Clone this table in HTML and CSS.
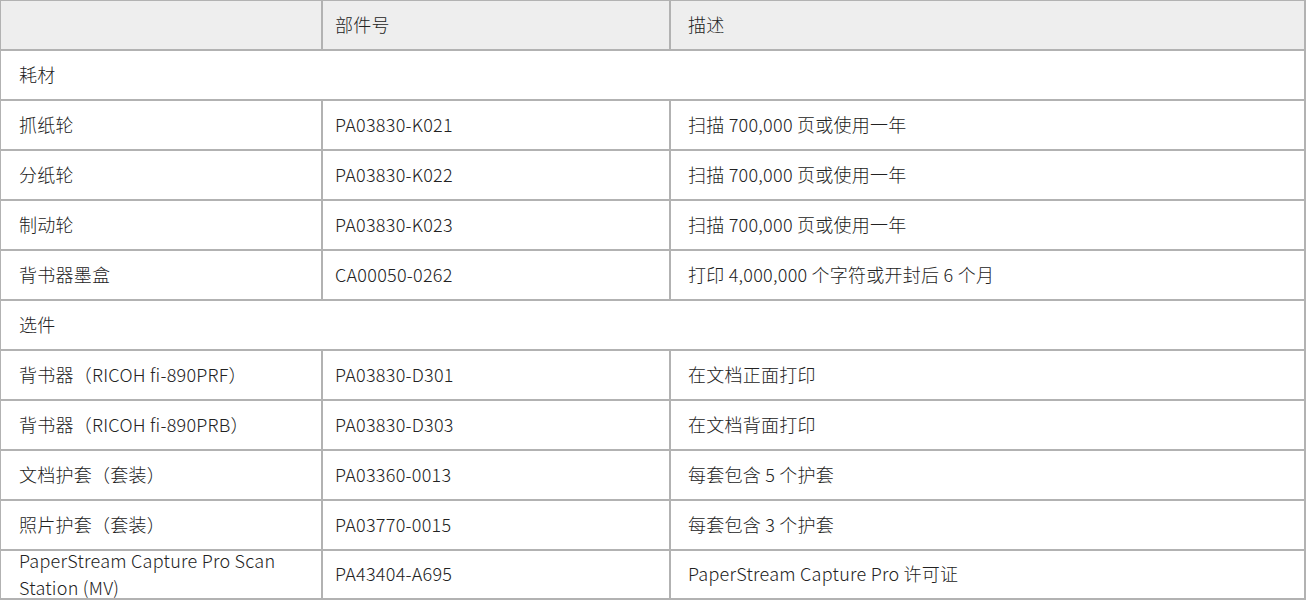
FILE: index.html
```html
<!DOCTYPE html>
<html lang="zh-CN">
<head>
<meta charset="utf-8">
<title>部件</title>
<link rel="stylesheet" href="styles.css">
</head>
<body>
<div class="table">
  <div class="cell head c1"></div>
  <div class="cell head c2">部件号</div>
  <div class="cell head c3">描述</div>

  <div class="cell section">耗材</div>

  <div class="cell c1">抓纸轮</div>
  <div class="cell c2">PA03830-K021</div>
  <div class="cell c3">扫描 700,000 页或使用一年</div>

  <div class="cell c1">分纸轮</div>
  <div class="cell c2">PA03830-K022</div>
  <div class="cell c3">扫描 700,000 页或使用一年</div>

  <div class="cell c1">制动轮</div>
  <div class="cell c2">PA03830-K023</div>
  <div class="cell c3">扫描 700,000 页或使用一年</div>

  <div class="cell c1">背书器墨盒</div>
  <div class="cell c2">CA00050-0262</div>
  <div class="cell c3">打印 4,000,000 个字符或开封后 6 个月</div>

  <div class="cell section">选件</div>

  <div class="cell c1">背书器（RICOH fi-890PRF）</div>
  <div class="cell c2">PA03830-D301</div>
  <div class="cell c3">在文档正面打印</div>

  <div class="cell c1">背书器（RICOH fi-890PRB）</div>
  <div class="cell c2">PA03830-D303</div>
  <div class="cell c3">在文档背面打印</div>

  <div class="cell c1">文档护套（套装）</div>
  <div class="cell c2">PA03360-0013</div>
  <div class="cell c3">每套包含 5 个护套</div>

  <div class="cell c1">照片护套（套装）</div>
  <div class="cell c2">PA03770-0015</div>
  <div class="cell c3">每套包含 3 个护套</div>

  <div class="cell c1 last">PaperStream Capture Pro Scan Station (MV)</div>
  <div class="cell c2 last">PA43404-A695</div>
  <div class="cell c3 last">PaperStream Capture Pro 许可证</div>
</div>
</body>
</html>
```
FILE: styles.css
```css
html, body {
  margin: 0;
  padding: 0;
  background: #ffffff;
}

body {
  font-family: "Noto Sans CJK SC", "Noto Sans", sans-serif;
  font-size: 18px;
  font-weight: 300;
  letter-spacing: 0.25px;
  line-height: 1.5;
  color: #222222;
}

.table {
  display: grid;
  grid-template-columns: 322px 348px 635px;
  grid-template-rows: repeat(11, 50px) 49px;
  width: 1305px;
  border-left: 1px solid #b2b2b2;
  border-top: 1px solid #b2b2b2;
  overflow: hidden;
}

.cell {
  box-sizing: border-box;
  border-right: 2px solid #b2b2b2;
  border-bottom: 2px solid #b2b2b2;
  display: flex;
  align-items: center;
  padding: 0 17px 2px 18px;
  white-space: normal;
  min-width: 0;
}

.c2 {
  padding-left: 12px;
}

.c3 {
  padding-left: 17px;
}

.head {
  background: #eeeeee;
}

.section {
  grid-column: 1 / 4;
}

.last {
  line-height: 27px;
}
```
